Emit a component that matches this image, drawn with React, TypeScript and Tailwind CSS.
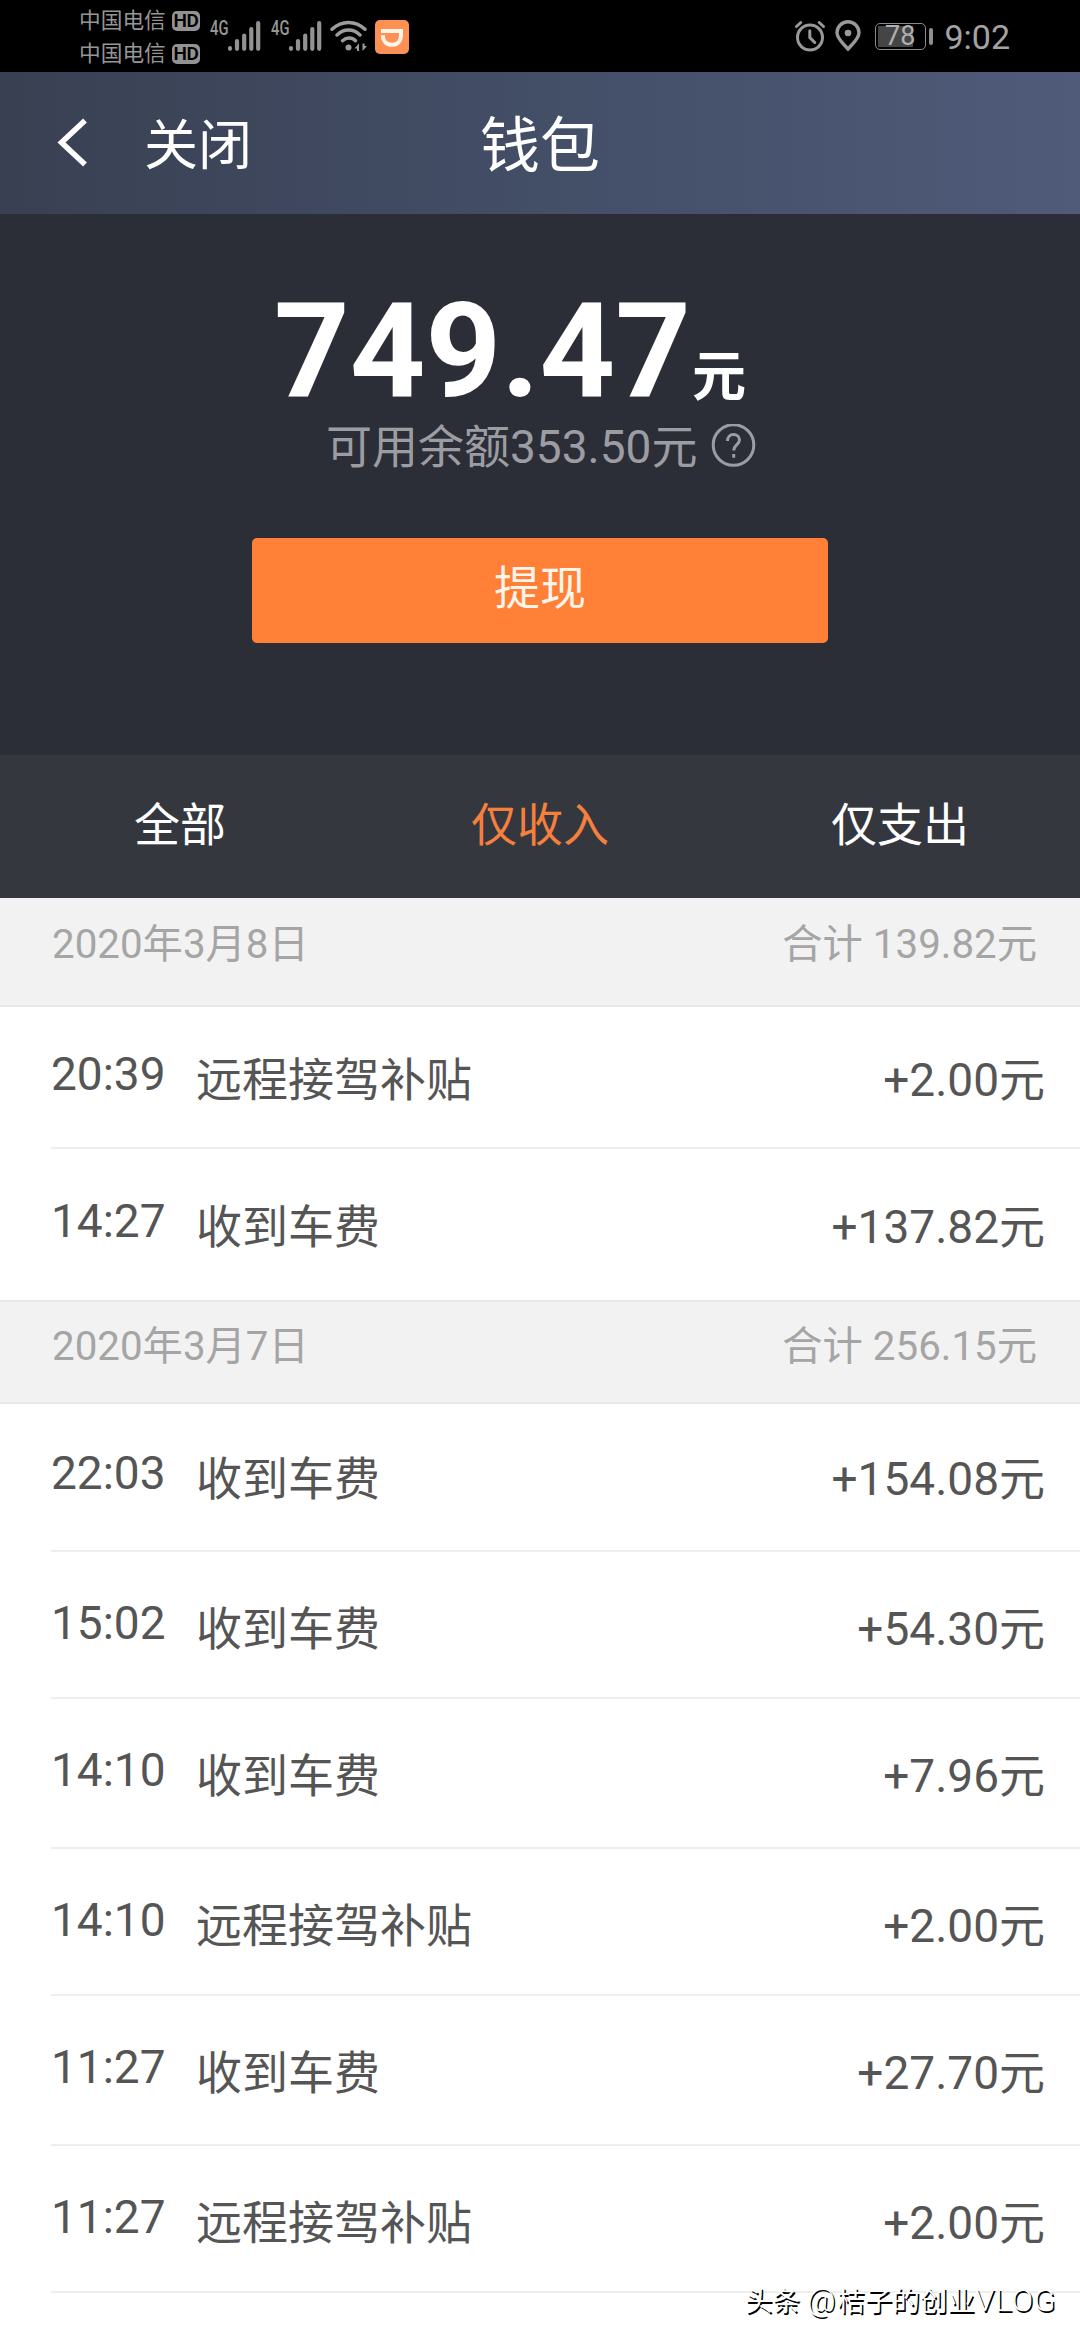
type Entry = { time: string; label: string; amount: string; box: string };
type Day = { date: string; total: string; box: string; entries: Entry[] };

const days: Day[] = [
  {
    date: '2020年3月8日',
    total: '合计 139.82元',
    box: 'h-[109px] border-b-2 pt-[23px]',
    entries: [
      { time: '20:39', label: '远程接驾补贴', amount: '+2.00元', box: 'h-[142px] pt-[40px] border-b-2' },
      { time: '14:27', label: '收到车费', amount: '+137.82元', box: 'h-[151px] pt-[45px]' },
    ],
  },
  {
    date: '2020年3月7日',
    total: '合计 256.15元',
    box: 'h-[104px] border-y-2 pt-[21px]',
    entries: [
      { time: '22:03', label: '收到车费', amount: '+154.08元', box: 'h-[148px] pt-[42px] border-b-2' },
      { time: '15:02', label: '收到车费', amount: '+54.30元', box: 'h-[147px] pt-[44px] border-b-2' },
      { time: '14:10', label: '收到车费', amount: '+7.96元', box: 'h-[150px] pt-[44px] border-b-2' },
      { time: '14:10', label: '远程接驾补贴', amount: '+2.00元', box: 'h-[147px] pt-[44px] border-b-2' },
      { time: '11:27', label: '收到车费', amount: '+27.70元', box: 'h-[150px] pt-[44px] border-b-2' },
      { time: '11:27', label: '远程接驾补贴', amount: '+2.00元', box: 'h-[147px] pt-[44px] border-b-2' },
    ],
  },
];

function Carrier() {
  return (
    <div className="flex h-[33px] items-center">
      <span className="w-[93px] text-[21.7px] leading-[24px]">中国电信</span>
      <span className="flex h-[20px] w-[28px] items-center justify-center rounded-[5px] bg-[#929292] text-[19px] leading-none font-semibold tracking-tight text-black">
        HD
      </span>
    </div>
  );
}

function Signal() {
  return (
    <div className="flex h-[31px] w-[51px] items-start">
      <span className="h-[18px] w-[17px] origin-left scale-x-[0.72] text-[20.5px] leading-[16px] font-medium">4G</span>
      <svg className="h-[31px] w-[34px] shrink-0" viewBox="0 0 34 31" stroke="#929292" strokeWidth="4.2" strokeLinecap="round">
        <path d="M3 28.2v.6M10 21v7.8M17.2 15.5v13.3M24.3 9v19.8M31.2 3v25.8" />
      </svg>
    </div>
  );
}

function StatusBar() {
  return (
    <div className="flex h-[72px] items-start bg-black text-[#969696]">
      <div className="mt-[4px] ml-[79px] w-[131px]">
        <Carrier />
        <Carrier />
      </div>
      <div className="mt-[20px] flex">
        <Signal />
        <div className="w-[10px]" />
        <Signal />
      </div>
      <svg className="mt-[20px] ml-[8px] h-[32px] w-[38px]" viewBox="0 0 38 32" fill="none" stroke="#9c9c9c" strokeWidth="3.4" strokeLinecap="round">
        <path d="M2 9.3C12 .2 25 .2 35 9.3M7 15c7-6.600 16-6.600 23 0M12.500 20.700c4-3.600 9.500-3.600 13 0" />
        <circle cx="18.500" cy="27.500" r="3" fill="#9c9c9c" stroke="none" />
        <path d="M24.500 28.500l4.500-5v7.500h-2v-2.500zM37 26l-4.500 5v-7.500h2v2.500z" fill="#9c9c9c" stroke="none" />
      </svg>
      <svg className="mt-[20px] ml-[7px] h-[34px] w-[34px]" viewBox="0 0 34 34" fill="none">
        <rect width="34" height="34" rx="5" fill="#fc9153" />
        <path d="M6 11H26V14.500C26 21 22.500 24.800 17 24.800C11.500 24.800 8 21.200 7.800 15.300" stroke="#fff4e8" strokeWidth="4" />
      </svg>
      <div className="ml-auto flex">
        <svg className="mt-[20px] h-[32px] w-[32px]" viewBox="0 0 32 32" fill="none" stroke="#999" strokeWidth="3" strokeLinecap="round" strokeLinejoin="round">
          <circle cx="16" cy="17.500" r="12.500" />
          <path d="M15.800 10.800v6.900l5 4.800M2.500 6.500l4.300-4M29.500 6.500l-4.300-4" />
        </svg>
        <svg className="mt-[20px] ml-[9px] h-[32px] w-[26px]" viewBox="0 0 26 32" fill="none" stroke="#999" strokeWidth="3.4">
          <path d="M13 29C8 23.500 2 18.500 2 12.800a11 11 0 0 1 22 0c0 5.700-6 10.700-11 16.200z" />
          <circle cx="13" cy="13" r="3.300" fill="#999" stroke="none" />
        </svg>
        <div className="mt-[23px] ml-[14px] flex h-[27px] w-[51px] items-stretch rounded-[5px] border-[1.5px] border-[#8a8a8a] p-[2px]">
          <div className="flex w-[35px] justify-end bg-[#454545]">
            <span className="-mr-[2px] text-[27px] leading-[21px] text-[#b0b0b0]">78</span>
          </div>
        </div>
        <div className="mt-[28px] ml-[3px] h-[17px] w-[4px] rounded-[2px] bg-[#8f8f8f]" />
        <span className="mt-[17px] mr-[70px] ml-[11px] text-[34px] leading-[40px] text-[#a3a3a3]">9:02</span>
      </div>
    </div>
  );
}

function Header() {
  return (
    <header className="grid h-[142px] grid-cols-3 bg-linear-to-r from-[#394052] via-[#434e67] to-[#4f5b79] text-white">
      <div className="flex">
        <svg className="mt-[45px] ml-[56px] h-[52px] w-[34px]" viewBox="0 0 34 52" fill="none" stroke="#fff" strokeWidth="5.5">
          <path d="M29 3.500L5.500 25.500l23.500 22" />
        </svg>
        <span className="mt-[43px] ml-[54px] text-[54px] leading-[64px]">关闭</span>
      </div>
      <h1 className="mt-[40px] text-center text-[60px] leading-[70px] font-normal">钱包</h1>
    </header>
  );
}

function Balance() {
  return (
    <section className="h-[541px] bg-[#2c2e37]">
      <div className="flex h-[204px] items-baseline pt-[72px] pl-[274px] text-white">
        <span className="text-[132px] leading-[130px] font-bold">749.47</span>
        <span className="ml-px text-[54px] leading-[60px] font-bold">元</span>
      </div>
      <div className="mt-[2px] flex h-[54px] items-center pl-[326px] text-[#9c9da2]">
        <span className="text-[46px] leading-[54px]">可用余额353.50元</span>
        <svg className="ml-[13px] h-[46px] w-[46px]" viewBox="0 0 46 46" fill="none" stroke="#9c9da2" strokeWidth="3">
          <circle cx="23.500" cy="21" r="20.300" />
          <path d="M17.500 17c0-4 2.600-6.500 6-6.500s6 2.300 6 5.600c0 4.400-5.800 5-5.800 10.400M23.700 30v3.800" />
        </svg>
      </div>
      <button className="mt-[64px] ml-[252px] flex h-[105px] w-[576px] justify-center rounded-[5px] bg-[#ff8036] pt-[23px] text-[46px] leading-[54px] text-[#fff5ea]">
        提现
      </button>
    </section>
  );
}

function Tabs() {
  return (
    <nav className="grid h-[143px] grid-cols-3 bg-[#35373f] pt-[43px] text-center text-[46px] leading-[54px] text-white">
      <span>全部</span>
      <span className="text-[#f5803e]">仅收入</span>
      <span>仅支出</span>
    </nav>
  );
}

function DayGroup({ day }: { day: Day }) {
  return (
    <section>
      <div className={`flex justify-between border-[#e8e8e8] bg-[#f2f2f2] pr-[43px] pl-[52px] text-[40.3px] leading-[48px] text-[#a5a5a5] ${day.box}`}>
        <span>{day.date}</span>
        <span>{day.total}</span>
      </div>
      {day.entries.map((entry, i) => (
        <div key={i} className={`ml-[51px] flex border-[#eeeeee] pr-[35px] text-[46px] leading-[54px] text-[#555] ${entry.box}`}>
          <span className="w-[145px]">{entry.time}</span>
          <span className="mt-[6px]">{entry.label}</span>
          <span className="mt-[6px] ml-auto">{entry.amount}</span>
        </div>
      ))}
    </section>
  );
}

export default function App() {
  return (
    <div className="relative h-[2340px] w-[1080px] overflow-hidden bg-white font-['Roboto','Noto_Sans_CJK_SC',sans-serif]">
      <StatusBar />
      <Header />
      <Balance />
      <Tabs />
      {days.map((day) => (
        <DayGroup key={day.date} day={day} />
      ))}
      <div className="absolute right-[24px] bottom-[20px] flex items-baseline text-[27.5px] leading-[36px] whitespace-nowrap text-white [text-shadow:1.5px_1.5px_0_#000]">
        <span>头条</span>
        <span className="mr-[2px] ml-[7px] text-[31px] font-light">@</span>
        <span>桔子的创业</span>
        <span className="text-[32px] font-light tracking-[0.5px]">VLOG</span>
      </div>
    </div>
  );
}
